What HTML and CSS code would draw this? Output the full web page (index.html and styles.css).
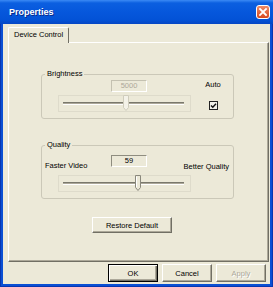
FILE: index.html
```html
<!DOCTYPE html>
<html lang="en">
<head>
    <meta charset="UTF-8">
    <title>Properties</title>
    <link rel="stylesheet" href="styles.css">
</head>
<body>
    <div class="window">
        <div class="titlebar">
            <span class="title">Properties</span>
            <span class="close">
                <svg width="12" height="12" viewBox="0 0 12 12"><path d="M3 3 L9 9 M9 3 L3 9" stroke="#fff" stroke-width="1.8" stroke-linecap="square"/></svg>
            </span>
        </div>
        <div class="frame">
            <div class="client">
                <div class="tabs">
                    <div class="tab">Device Control</div>
                </div>
                <div class="panel">
                    <fieldset class="group brightness">
                        <legend>Brightness</legend>
                        <div class="bright-row">
                            <div class="slider-col">
                                <div class="value disabled">5000</div>
                                <div class="slider">
                                    <div class="channel"></div>
                                    <svg class="thumb" style="left:64px" width="6" height="16" viewBox="0 0 6 16"><path d="M0.5 0.5 H5.5 V12.5 L3 15.5 L0.5 12.5 Z" fill="#f4f2e8" stroke="#cfccbc"/></svg>
                                </div>
                            </div>
                            <div class="auto-col">
                                <span>Auto</span>
                                <svg class="check" width="9" height="9" viewBox="0 0 9 9"><rect x="0.5" y="0.5" width="8" height="8" fill="#f2f1ea" stroke="#222"/><path d="M2 4.5 L3.8 6.3 L7 2.8" fill="none" stroke="#111" stroke-width="1.4"/></svg>
                            </div>
                        </div>
                    </fieldset>

                    <fieldset class="group quality">
                        <legend>Quality</legend>
                        <div class="q-row">
                            <span class="q-left">Faster Video</span>
                            <div class="value">59</div>
                            <span class="q-right">Better Quality</span>
                        </div>
                        <div class="slider q-slider">
                            <div class="channel"></div>
                            <svg class="thumb" style="left:76px" width="6" height="16" viewBox="0 0 6 16"><path d="M0.5 0.5 H5.5 V12.5 L3 15.5 L0.5 12.5 Z" fill="#ece9d8" stroke="#8a887c"/><path d="M1.5 1.5 V12" stroke="#fff"/></svg>
                        </div>
                    </fieldset>

                    <button class="btn restore">Restore Default</button>
                </div>
                <div class="buttons">
                    <button class="btn default">OK</button>
                    <button class="btn">Cancel</button>
                    <button class="btn" disabled>Apply</button>
                </div>
            </div>
        </div>
    </div>
</body>
</html>
```

FILE: styles.css
```css
body {
    margin: 0;
    font-family: "Liberation Sans", Arial, sans-serif;
    font-size: 7.5px;
    color: #000;
}
.window {
    width: 273px;
    height: 287px;
    display: flex;
    flex-direction: column;
    background: #0a4fd4;
}
.titlebar {
    height: 24px;
    box-sizing: border-box;
    display: flex;
    align-items: center;
    justify-content: space-between;
    padding: 0 3px 0 9px;
    background: linear-gradient(to bottom, #3b8af5 0px, #0b5fe0 3px, #0657dc 12px, #0352d6 20px, #0546c4 24px);
}
.title {
    color: #fff;
    font-weight: bold;
    font-size: 9px;
    text-shadow: 1px 1px #0a2a8a;
}
.close {
    width: 14px;
    height: 14px;
    box-sizing: border-box;
    border: 1px solid #fff;
    border-radius: 3px;
    background: linear-gradient(to bottom, #ee8a66, #d8481e);
    display: flex;
    align-items: center;
    justify-content: center;
}
.frame {
    flex: 1;
    padding: 0 3px 3px;
    background: #0a4fd4;
    box-shadow: inset 1px 0 #0836b0, inset -1px 0 #0836b0, inset 0 -1px #0836b0;
}
.client {
    height: 260px;
    box-sizing: border-box;
    background: #ece9d8;
    padding: 3px 0 0 5px;
}
.tabs {
    display: flex;
}
.tab {
    height: 16px;
    box-sizing: border-box;
    padding: 0 5px;
    line-height: 14px;
    border: 1px solid;
    border-color: #fff #716f64 transparent #fff;
    border-bottom: none;
    border-radius: 2px 2px 0 0;
    background: #ece9d8;
    position: relative;
    z-index: 1;
    margin-bottom: -1px;
}
.panel {
    width: 261px;
    height: 220px;
    box-sizing: border-box;
    border: 1px solid;
    border-color: #fff #716f64 #716f64 #fff;
    box-shadow: inset -1px -1px #aca899;
    padding: 26px 0 0 32px;
}
.group {
    margin: 0;
    padding: 1px 0 6px 0;
    width: 193px;
    min-width: 0;
    box-sizing: border-box;
    border: 1px solid #cbc8b8;
    border-radius: 3px;
}
.group legend {
    margin-left: 3px;
    padding: 0 2px;
    line-height: 10px;
}
.quality {
    margin-top: 21px;
    padding-top: 0;
}
.bright-row {
    display: flex;
    margin-left: 16px;
}
.slider-col {
    width: 133px;
    display: flex;
    flex-direction: column;
}
.value {
    width: 36px;
    height: 12px;
    box-sizing: border-box;
    border: 1px solid;
    border-color: #8f8d80 #fff #fff #8f8d80;
    text-align: center;
    line-height: 10px;
}
.slider-col .value {
    margin-left: 53px;
}
.value.disabled {
    color: #aca899;
    border-color: #c4c1b1 #fff #fff #c4c1b1;
}
.slider {
    width: 133px;
    height: 17px;
    margin-top: 3px;
    box-sizing: border-box;
    border: 1px solid #dedbcb;
    position: relative;
}
.channel {
    margin: 6px 6px 0 4px;
    height: 1px;
    background: #aca899;
    border-top: 1px solid #7a786c;
    border-bottom: 1px solid #fff;
}
.thumb {
    position: absolute;
    top: -1px;
    display: block;
}
.auto-col {
    width: 24px;
    margin-left: 10px;
    display: flex;
    flex-direction: column;
    align-items: center;
}
.auto-col span {
    line-height: 10px;
}
.check {
    display: block;
    margin-top: 11px;
}
.q-row {
    display: grid;
    grid-template-columns: 66px 36px 1fr;
    height: 22px;
    margin: 0 4px 0 3px;
}
.q-row .value {
    margin-top: 5px;
}
.q-left {
    margin-top: 11px;
    line-height: 10px;
}
.q-right {
    justify-self: end;
    margin-top: 12px;
    line-height: 10px;
}
.q-slider {
    margin-left: 16px;
}
.btn {
    font-family: inherit;
    font-size: 7.5px;
    color: #000;
    background: #ece9d8;
    border: 1px solid;
    border-color: #fff #716f64 #716f64 #fff;
    box-shadow: inset -1px -1px #aca899;
    padding: 0;
    margin: 0;
    width: 50px;
    height: 18px;
    box-sizing: border-box;
}
.btn.default {
    border-color: #000;
    box-shadow: inset 1px 1px #fff, inset -1px -1px #716f64, inset -2px -2px #aca899;
}
.btn:disabled {
    color: #aca899;
    text-shadow: 1px 1px #fff;
}
.restore {
    display: block;
    width: 80px;
    height: 16px;
    margin: 18px 0 0 51px;
}
.buttons {
    display: flex;
    justify-content: flex-end;
    gap: 4px;
    margin-top: 2px;
    padding-right: 4px;
}
```
